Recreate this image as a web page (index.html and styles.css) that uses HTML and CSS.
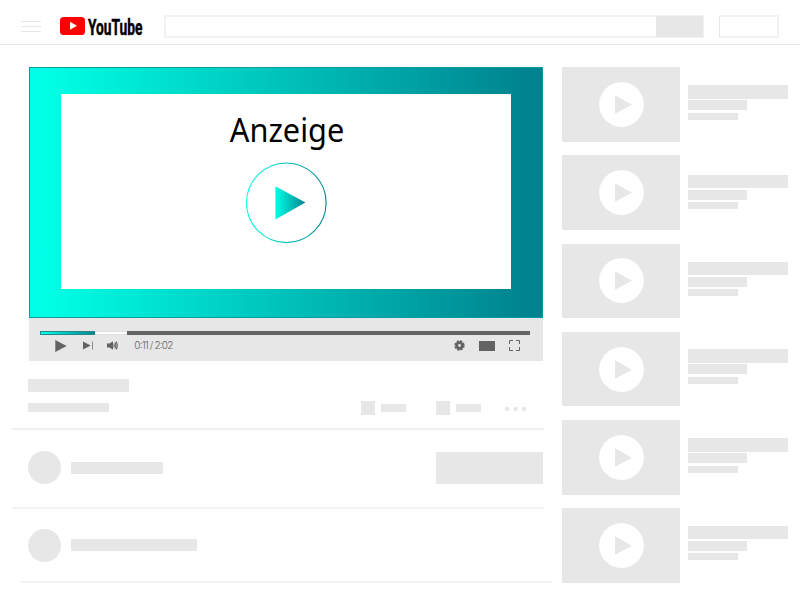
FILE: index.html
```html
<!DOCTYPE html>
<html lang="de">
<head>
<meta charset="utf-8">
<title>YouTube</title>
<link rel="stylesheet" href="styles.css">
</head>
<body>
<svg class="defs" width="0" height="0" aria-hidden="true">
  <defs>
    <linearGradient id="teal"><stop offset="0" stop-color="#00ffe6"/><stop offset="1" stop-color="#00838f"/></linearGradient>
    <symbol id="thumb-play" viewBox="0 0 45 45"><circle cx="22.5" cy="22.5" r="22.4" fill="#fff"/><path d="M16 13.2v18.6L33 22.7z" fill="#e7e7e7"/></symbol>
  </defs>
</svg>
<header class="topbar">
  <svg class="menu" width="20" height="12" viewBox="0 0 20 12"><path d="M0 .5h20M0 5.5h20M0 10.5h20" stroke="#e7e7e7"/></svg>
  <svg class="logo" width="84" height="30" viewBox="0 0 84 30">
    <rect y="5" width="25" height="18" rx="3.5" fill="#f00"/>
    <path d="M10 9.8v8l7-4z" fill="#fff"/>
    <text class="wordmark" x="28" y="22.7" textLength="54.5" lengthAdjust="spacingAndGlyphs">YouTube</text>
  </svg>
  <div class="search"><div class="search-button"></div></div>
  <div class="signin"></div>
</header>
<div class="page">
  <main class="primary">
    <section class="player">
      <div class="video">
        <div class="ad">
          <svg width="120" height="50" viewBox="0 0 120 50"><text class="ad-title" x="3.8" y="34.4" textLength="114.5" lengthAdjust="spacingAndGlyphs">Anzeige</text></svg>
          <svg class="ad-play" width="82" height="82" viewBox="0 0 82 82"><circle cx="41.3" cy="40.8" r="39.8" fill="none" stroke="url(#teal)" stroke-width="1.1"/><path d="M30.4 24.2v33.2L60.4 40.5z" fill="url(#teal)"/></svg>
        </div>
      </div>
      <div class="controls">
        <div class="progress"><div class="played"></div><div class="buffered"></div></div>
        <div class="buttons">
          <svg class="play" width="12" height="12" viewBox="0 0 12 12"><path d="M.3 0v12L11.7 6z"/></svg>
          <svg class="next" width="10" height="9" viewBox="0 0 10 9"><path d="M0 .6v7.8l7.7-3.9z"/><path d="M9 .5h.7v8H9z"/></svg>
          <svg class="volume" width="11" height="9" viewBox="0 0 11 9"><path d="M0 2.5h2.5L6 .3v8.4L2.5 6.5H0z"/><path d="M6.7 2.8q1.2 1.7 0 3.4M7.8 1.6q2.2 2.9 0 5.8M9 .6q2.8 3.9 0 7.8" fill="none" stroke="#636363" stroke-width="1.1"/></svg>
          <svg class="time" width="44" height="16" viewBox="0 0 44 16"><text x=".3" y="11.4" textLength="39" lengthAdjust="spacing">0:11 / 2:02</text></svg>
          <svg class="gear" width="11" height="11" viewBox="0 0 11 11"><circle cx="5.5" cy="5.5" r="2.8" fill="none" stroke="#636363" stroke-width="2.8"/><circle cx="5.5" cy="5.5" r="4.3" fill="none" stroke="#636363" stroke-width="1.8" stroke-dasharray="2.2 1.177"/></svg>
          <div class="theater"></div>
          <svg class="fullscreen" width="11" height="11" viewBox="0 0 11 11"><path d="M.5 4V.5H4M7 .5h3.5V4M10.5 7v3.5H7M4 10.5H.5V7" fill="none" stroke="#636363"/></svg>
        </div>
      </div>
    </section>
    <section class="info">
      <div class="titles"><i class="bar title"></i><i class="bar views"></i></div>
      <div class="actions">
        <i class="bar square"></i><i class="bar label"></i>
        <i class="bar square second"></i><i class="bar label"></i>
        <svg class="more" width="24" height="6" viewBox="0 0 24 6"><g fill="#e7e7e7"><circle cx="3" cy="3" r="2.2"/><circle cx="11.5" cy="3" r="2.2"/><circle cx="20" cy="3" r="2.2"/></g></svg>
      </div>
    </section>
    <section class="row channel"><i class="avatar"></i><i class="bar name"></i><i class="bar subscribe"></i></section>
    <section class="row comment"><i class="avatar"></i><i class="bar name long"></i></section>
    <div class="end-line"></div>
  </main>
  <aside class="related">
    <article class="item"><div class="thumb"><svg width="45" height="45"><use href="#thumb-play"/></svg></div><div class="lines"><i></i><i></i><i></i></div></article>
    <article class="item"><div class="thumb"><svg width="45" height="45"><use href="#thumb-play"/></svg></div><div class="lines low"><i></i><i></i><i></i></div></article>
    <article class="item"><div class="thumb"><svg width="45" height="45"><use href="#thumb-play"/></svg></div><div class="lines"><i></i><i></i><i></i></div></article>
    <article class="item"><div class="thumb"><svg width="45" height="45"><use href="#thumb-play"/></svg></div><div class="lines high"><i></i><i></i><i></i></div></article>
    <article class="item"><div class="thumb"><svg width="45" height="45"><use href="#thumb-play"/></svg></div><div class="lines"><i></i><i></i><i></i></div></article>
    <article class="item"><div class="thumb"><svg width="45" height="45"><use href="#thumb-play"/></svg></div><div class="lines high"><i></i><i></i><i></i></div></article>
  </aside>
</div>
</body>
</html>
```
FILE: styles.css
```css
* { box-sizing: border-box; }
body { margin: 0; background: #fff; font-family: "Noto Sans", sans-serif; overflow: hidden; height: 614px; }
svg { display: block; flex: none; overflow: visible; }
i { display: block; flex: none; }
.defs { position: absolute; }

.topbar { height: 45px; border-bottom: 1px solid #e7e7e7; display: flex; align-items: flex-start; padding-left: 21px; }
.menu { margin-top: 21px; }
.logo { margin: 12px 0 0 19px; }
.wordmark { font: bold 22.5px Roboto, "Noto Sans", sans-serif; fill: #000; stroke: #000; stroke-width: .5px; }
.search { margin: 15px 0 0 20px; width: 540px; height: 23px; border: 2px solid #f2f2f2; display: flex; justify-content: flex-end; }
.search-button { width: 47.5px; margin: -1px -1px -1px 0; background: #e7e7e7; }
.signin { margin: 15px 0 0 15px; width: 60px; height: 23px; border: 2px solid #f2f2f2; border-left: 1px solid #e7e7e7; }

.page { display: flex; align-items: flex-start; }
.primary { width: 562px; flex: none; padding-top: 22px; }
.player { margin-left: 29px; width: 514px; }
.video { height: 251px; padding: 26px 31px; border: 1px solid #089c9f; background: linear-gradient(90deg, #00ffe6 3%, #00838f 97%); }
.ad { height: 195px; width: 450px; background: #fff; display: flex; flex-direction: column; align-items: center; padding-top: 14px; }
.ad-title { font-size: 32px; fill: #000; }
.ad-play { margin-top: 4px; }

.controls { height: 43px; background: #e7e7e7; padding: 13px 13px 0 11px; }
.progress { height: 4px; background: #636363; display: flex; }
.played { width: 55px; background: linear-gradient(90deg, #00ffe6, #00838f); border: solid #24888b; border-width: 1px 0 1px 1px; }
.buffered { width: 32px; background: #fff; border: solid #e0e0e0; border-width: 1px 0; }
.buttons { display: flex; align-items: center; height: 21px; fill: #636363; }
.play { margin-left: 15px; }
.next { margin-left: 16px; }
.volume { margin-left: 14px; }
.time { margin-left: 16px; }
.time text { font: 300 10px Inter, sans-serif; fill: #636363; }
.gear { margin-left: auto; }
.theater { width: 16px; height: 10px; background: #636363; margin: 0 14px 0 14px; }
.fullscreen { margin: 0 10px 0 0; }

.bar { background: #e7e7e7; }
.info { margin-left: 12px; width: 532px; height: 69px; padding: 18px 17px 0 16px; border-bottom: 2px solid #efefef; display: flex; justify-content: space-between; }
.title { width: 101px; height: 13px; }
.views { width: 81px; height: 9px; margin-top: 11px; }
.actions { display: flex; align-items: center; height: 14px; margin-top: 22px; }
.square { width: 14px; height: 14px; }
.second { margin-left: 30px; }
.label { width: 25px; height: 8px; margin: -1px 0 0 6px; }
.more { margin: 2px -1px 0 23px; }
.row { margin-left: 12px; width: 532px; display: flex; align-items: center; padding: 0 1px 0 16px; }
.channel { height: 79px; padding-bottom: 2px; border-bottom: 2px solid #f3f3f3; }
.comment { height: 72px; }
.avatar { width: 33px; height: 33px; border-radius: 50%; background: #e7e7e7; }
.name { width: 92px; height: 12px; margin-left: 10px; }
.long { width: 126px; }
.subscribe { width: 107px; height: 32px; margin: 1px 0 0 auto; }
.end-line { margin-left: 20px; width: 532px; height: 2px; background: #f3f3f3; }

.related { padding-top: 22px; display: flex; flex-direction: column; gap: 13.8px; }
.item { display: flex; height: 74.5px; }
.thumb { width: 118px; background: #e7e7e7; display: flex; align-items: center; justify-content: center; }
.lines { margin: 18px 0 0 8px; }
.lines.low { margin-top: 19.5px; }
.lines.high { margin-top: 17.5px; }
.lines i { background: #e7e7e7; width: 100px; height: 13.5px; }
.lines i:nth-child(2) { width: 59px; height: 10px; margin-top: 1.5px; }
.lines i:nth-child(3) { width: 50px; height: 7px; margin-top: 2.5px; }
```
